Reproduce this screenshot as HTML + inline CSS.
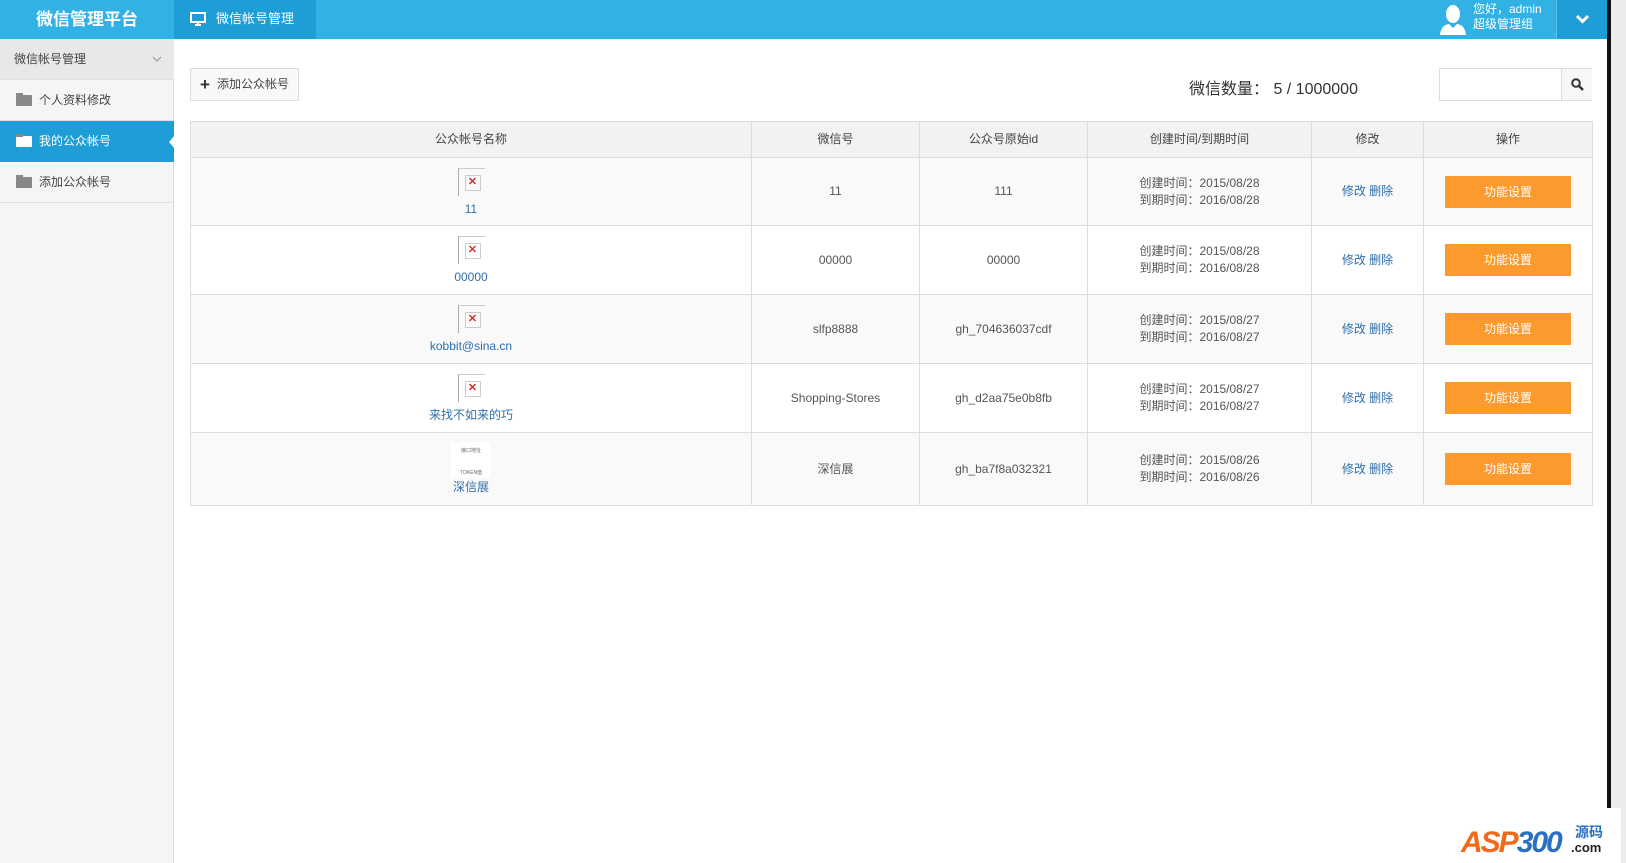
<!DOCTYPE html>
<html><head><meta charset="utf-8">
<style>
*{margin:0;padding:0;box-sizing:border-box}
body{width:1626px;height:863px;overflow:hidden;background:#fff;font-family:"Liberation Sans","Noto Sans CJK SC",sans-serif;font-size:12px;color:#555;position:relative}
.hdr{position:absolute;left:0;top:0;width:1607px;height:39px;background:#31b1e4}
.logo{position:absolute;left:0;top:0;width:174px;height:39px;color:#fff;font-size:17px;font-weight:bold;text-align:center;line-height:39px}
.tab{position:absolute;left:174px;top:0;width:142px;height:39px;background:#1e9dd6;color:#fff;font-size:13px;line-height:37px;padding-left:42px}
.user{position:absolute;left:1473px;top:2px;color:#fff;font-size:12px;line-height:15px}
.dd{position:absolute;left:1556px;top:0;width:51px;height:39px;background:#1e9dd6;border-left:1px solid #5cc2ea}
.sb{position:absolute;left:0;top:39px;width:174px;height:824px;background:#f5f5f5;border-right:1px solid #ddd}
.si{position:absolute;left:0;width:174px;height:41px;line-height:41px;font-size:12px;color:#444;border-bottom:1px solid #e0e0e0;padding-left:39px}
.si .f{position:absolute;left:16px;top:15px;width:16px;height:11px;background:#888;border-radius:1px}
.si .f:before{content:"";position:absolute;left:0;top:-2px;width:7px;height:3px;background:#888}
.scr{position:absolute;left:1607px;top:0;width:19px;height:863px;background:#ececec;border-left:4px solid #111}
table{position:absolute;left:190px;top:121px;border-collapse:collapse;table-layout:fixed;width:1402px}
td,th{border:1px solid #ddd;text-align:center;font-weight:normal;font-size:12px;color:#555;line-height:17px}
th{background:#f2f2f2;height:36px;color:#444}
tr.o td{background:#f9f9f9}
a{color:#2f6fab;text-decoration:none}
.bi{display:inline-block;width:27px;height:28px;border-left:1px solid #aaa;border-top:1px solid #ccc;position:relative;margin-top:2px}
.bi:after{content:"✕";position:absolute;left:6px;top:6px;width:14px;height:14px;border:1px solid #ccc;color:#c33;font-size:11px;line-height:13px;text-align:center;font-weight:bold}
.btn{display:inline-block;width:126px;height:32px;line-height:32px;background:#fd9a2e;color:#fff;font-size:12px}
</style></head><body>
<div class="hdr">
<div class="logo">微信管理平台</div>
<div class="tab"><svg style="position:absolute;left:16px;top:12px" width="16" height="15" viewBox="0 0 16 15"><rect x="1" y="1" width="14" height="9" fill="none" stroke="#fff" stroke-width="2"/><rect x="5" y="12" width="6" height="2" fill="#fff"/><rect x="7" y="10" width="2" height="3" fill="#fff"/></svg>微信帐号管理</div>
<svg style="position:absolute;left:1440px;top:4px" width="26" height="31" viewBox="0 0 26 31"><ellipse cx="13" cy="10" rx="7" ry="9" fill="#fff"/><path d="M0 31 Q1 21 9 20 L13 24 L17 20 Q25 21 26 31Z" fill="#fff"/></svg>
<div class="user">您好，admin<br>超级管理组</div>
<div class="dd"><svg style="position:absolute;left:18px;top:14px" width="15" height="10" viewBox="0 0 15 10"><path d="M2 2 L7.5 7.5 L13 2" fill="none" stroke="#fff" stroke-width="3"/></svg></div>
</div>
<div class="sb">
<div class="si" style="top:0;background:#e8e8e8;padding-left:14px">微信帐号管理<svg style="position:absolute;left:152px;top:17px" width="10" height="7"><path d="M1 1 L5 5 L9 1" fill="none" stroke="#999" stroke-width="1.2"/></svg></div>
<div class="si" style="top:41px"><span class="f"></span>个人资料修改</div>
<div class="si" style="top:82px;background:#1e9dd6;color:#fff;border-color:#1e9dd6"><span class="f" style="background:#fff"></span>我的公众帐号<span style="position:absolute;right:-1px;top:14px;border:7px solid transparent;border-right-color:#fff;border-width:7px 6px"></span></div>
<div class="si" style="top:123px"><span class="f"></span>添加公众帐号</div>
</div>
<div style="position:absolute;left:190px;top:68px;width:109px;height:33px;border:1px solid #ddd;background:#f8f8f8;font-size:12px;line-height:31px;color:#444;padding-left:26px"><span style="position:absolute;left:9px;top:0;font-size:17px;font-weight:bold;color:#333">+</span>添加公众帐号</div>
<div style="position:absolute;left:1189px;top:75px;font-size:16px;color:#333">微信数量： 5 / 1000000</div>
<div style="position:absolute;left:1439px;top:68px;width:153px;height:33px;border:1px solid #ddd"><div style="position:absolute;left:121px;top:0;width:31px;height:31px;background:#f7f7f7;border-left:1px solid #ddd"><svg style="position:absolute;left:9px;top:9px" width="13" height="13"><circle cx="5" cy="5" r="3.8" fill="none" stroke="#333" stroke-width="2"/><path d="M8 8 L12 12" stroke="#333" stroke-width="2.4"/></svg></div></div>
<table>
<colgroup><col style="width:561px"><col style="width:168px"><col style="width:168px"><col style="width:224px"><col style="width:112px"><col style="width:169px"></colgroup>
<tr><th>公众帐号名称</th><th>微信号</th><th>公众号原始id</th><th>创建时间/到期时间</th><th>修改</th><th>操作</th></tr>
<tr class="o" style="height:68px"><td><span class="bi"></span><br><a>11</a></td><td>11</td><td>111</td><td>创建时间：2015/08/28<br>到期时间：2016/08/28</td><td><a>修改</a> <a>删除</a></td><td><span class="btn">功能设置</span></td></tr>
<tr style="height:69px"><td><span class="bi"></span><br><a>00000</a></td><td>00000</td><td>00000</td><td>创建时间：2015/08/28<br>到期时间：2016/08/28</td><td><a>修改</a> <a>删除</a></td><td><span class="btn">功能设置</span></td></tr>
<tr class="o" style="height:69px"><td><span class="bi"></span><br><a>kobbit@sina.cn</a></td><td>slfp8888</td><td>gh_704636037cdf</td><td>创建时间：2015/08/27<br>到期时间：2016/08/27</td><td><a>修改</a> <a>删除</a></td><td><span class="btn">功能设置</span></td></tr>
<tr style="height:69px"><td><span class="bi"></span><br><a>来找不如来的巧</a></td><td>Shopping-Stores</td><td>gh_d2aa75e0b8fb</td><td>创建时间：2015/08/27<br>到期时间：2016/08/27</td><td><a>修改</a> <a>删除</a></td><td><span class="btn">功能设置</span></td></tr>
<tr class="o" style="height:73px"><td><span style="display:inline-block;width:40px;height:36px;background:#fff;font-size:5px;line-height:11px;color:#666;padding-top:4px">接口地址<br><br>TOKEN值</span><br><a>深信展</a></td><td>深信展</td><td>gh_ba7f8a032321</td><td>创建时间：2015/08/26<br>到期时间：2016/08/26</td><td><a>修改</a> <a>删除</a></td><td><span class="btn">功能设置</span></td></tr>
</table>
<div class="scr"></div>
<div style="position:absolute;left:1443px;top:808px;width:178px;height:55px;background:#fff">
<div style="position:absolute;left:18px;top:18px;font-size:30px;font-weight:bold;font-style:italic;color:#f06a1c;letter-spacing:-2px">ASP<span style="color:#2a6fc2">300</span></div>
<div style="position:absolute;left:132px;top:14px;font-size:14px;font-weight:bold;color:#2a6fc2">源码</div>
<div style="position:absolute;left:128px;top:32px;font-size:13px;font-weight:bold;color:#222">.com</div>
</div>
</body></html>
